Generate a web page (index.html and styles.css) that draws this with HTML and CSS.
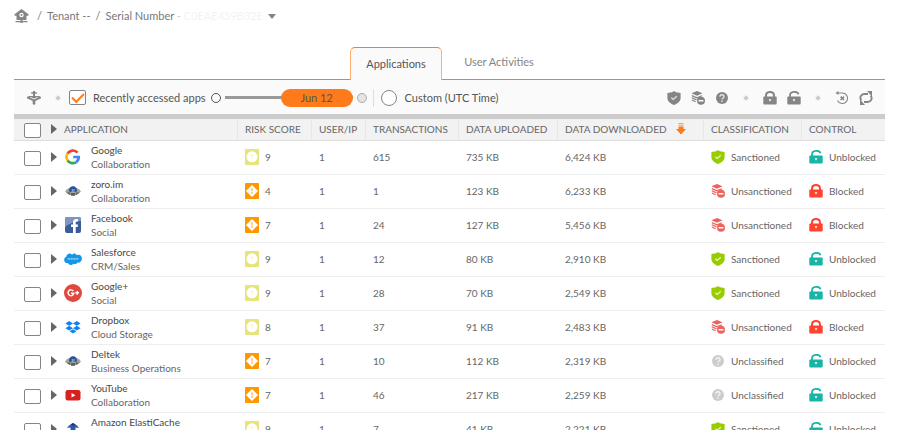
FILE: index.html
```html
<!DOCTYPE html>
<html lang="en">
<head>
<meta charset="utf-8">
<meta name="viewport" content="width=device-width, initial-scale=1">
<title>Applications</title>
<link rel="stylesheet" href="styles.css">
</head>
<body>
<svg class="sprite" aria-hidden="true">
  <symbol id="i-shield" viewBox="0 0 14 14"><path fill="currentColor" d="M7 0 9 1.200 13.600 2v5c0 3.300-3 5.500-6.600 7C3.400 12.500.400 10.300.400 7V2L5 1.200z"/><path fill="none" stroke="#fff" stroke-opacity=".8" stroke-width="1.200" d="M4.300 6.700 6.200 8.400 9.800 5.200"/></symbol>
  <symbol id="i-layers" viewBox="0 0 14 14"><path fill="currentColor" d="M6 0 11.500 2.300 6 4.800.500 2.300z"/><path fill="none" stroke="currentColor" stroke-width="1.200" d="M.800 4.600 6 6.900l5-2.200M.800 6.800l4.700 2.100M.800 9l3.800 1.700"/><circle cx="10" cy="9.800" r="4" fill="currentColor"/><path fill="#fff" d="M7.600 9h4.800v1.500H7.600z"/></symbol>
  <symbol id="i-question" viewBox="0 0 14 14"><circle cx="7" cy="7" r="6" fill="currentColor"/><path fill="none" stroke="#fff" stroke-opacity=".8" stroke-width="1.300" d="M5 5.700c0-2.600 4-2.600 4 0C9 7 7 7 7 8.600M7 9.600v1.300"/></symbol>
  <symbol id="i-lock" viewBox="0 0 14 14"><path fill="none" stroke="currentColor" stroke-width="2" d="M3 7V4.800C3 -.300 11 -.300 11 4.800V7"/><rect x=".3" y="5.500" width="13.400" height="8" rx="1" fill="currentColor"/><path fill="#fff" d="M5.700 8.300h2.600L7 10.700z"/></symbol>
  <symbol id="i-unlock" viewBox="0 0 14 14"><path fill="none" stroke="currentColor" stroke-width="1.800" d="M3 7V4.400C3 .200 10.500-.300 11.500 3.300"/><rect x=".3" y="5.500" width="13.400" height="8" rx="1" fill="currentColor"/><path fill="#fff" d="M5.700 8.300h2.600L7 10.700z"/></symbol>
  <symbol id="i-low" viewBox="0 0 14 16"><rect width="14" height="16" rx="1" fill="#e8e47c"/><circle cx="7" cy="7.800" r="5.500" fill="#fff"/><path stroke="#f3f1bd" d="M7 5v3.500M7 9.500v1"/></symbol>
  <symbol id="i-high" viewBox="0 0 14 16"><rect width="14" height="16" rx="1" fill="#ff9800"/><path fill="#fff" d="m7 2 6 6-6 6-6-6z"/><path stroke="#ffc272" stroke-width="1.600" d="M7 5.300v3M7 9v1.800"/></symbol>
  <symbol id="i-google" viewBox="-1 -1 18 18"><g fill="none" stroke-width="2.700"><path stroke="#ea4335" d="M2.600 4.600A6.100 6.100 0 0 1 12.500 3.600"/><path stroke="#fbbc05" d="M2.600 4.600a6.100 6.100 0 0 0 0 6.800"/><path stroke="#34a853" d="M2.600 11.400a6.100 6.100 0 0 0 8.600 1.700"/><path stroke="#4285f4" d="M11.200 13.100C13.300 11.700 13.700 9.900 13.700 8H8.200"/></g></symbol>
  <symbol id="i-generic" viewBox="-1 -1 18 18"><path fill="#a5a5a0" d="M0 8.500C2 5.500 5 4 8 4s6 1.500 8 4.500C14 11 11 12.400 8 12.400S2 11 0 8.500z"/><path fill="#605f5b" d="M1.500 9.500h4l-.500 2.500zM10.500 9.500h4L11 12zM6 10h4v2.800H6z"/><path fill="#28539a" d="M4 8.200C3.700 1.500 12.300 1.500 12 8.200l-1.400.800L8 8l-2.600 1z"/><path stroke="#a9c8e8" stroke-width=".900" d="M7.300 6v2M9 6v2"/></symbol>
  <symbol id="i-facebook" viewBox="-1 -1 18 18"><rect width="16" height="16" rx="2" fill="#3c5c98"/><path fill="#7e95c2" d="M0 2Q0 0 2 0h12q2 0 2 2v2Q7 4.500 0 10z"/><path fill="#fff" d="M8 16V10H6V7.400h2V5.500C8 3 9.400 1.700 13 2.200v2.300c-1.700-.1-2.300.1-2.300 1.400v1.500H13L12.600 10h-1.900v6z"/></symbol>
  <symbol id="i-salesforce" viewBox="0 0 18 16"><path fill="#1597e5" d="M2.500 5.500C2.500 2.500 6.500 1.500 8 3.700c1.500-1.800 3.900-1.500 4.700.500C15.500 3 18 5 17.900 7.800c0 2.700-2.500 4.400-4.500 3.800-.900 1.700-2.700 2-4 1.100-1.500 2-4.700 1.600-5.400-.600C1.500 12.500 0 10.500.200 8.600.300 7 1.300 6 2.500 5.500z"/><path stroke="#b9dff7" stroke-width="1.200" stroke-dasharray="1.200 .4" d="M3.500 7.800h11"/></symbol>
  <symbol id="i-gplus" viewBox="0 0 18 18"><circle cx="9" cy="9" r="9" fill="#e0483e"/><path fill="none" stroke="#fff" stroke-width="1.500" d="M9.300 7.100A2.900 2.900 0 1 0 9.800 9.200H7M11.300 8.800h3.800M13.200 6.900v3.800"/></symbol>
  <symbol id="i-dropbox" viewBox="-1 -1 18 18"><path fill="#0f82f5" d="M4.200 2 8 4.400 4.200 6.800.400 4.400zM11.800 2l3.800 2.400-3.800 2.400L8 4.400zM4.200 6.800 8 9.200l-3.800 2.400L.400 9.200zM11.800 6.800l3.800 2.400-3.800 2.400L8 9.200zM8 10.200l3.400 2.100L8 14.400l-3.400-2.100z"/></symbol>
  <symbol id="i-youtube" viewBox="-1 -1 18 18"><rect x=".5" y="3" width="15" height="10.500" rx="2.300" fill="#d7211f"/><path fill="#fff" d="m6.500 6 4 2.200-4 2.200z"/></symbol>
  <symbol id="i-elasticache" viewBox="-1 -1 18 18"><path fill="#2b5ba5" d="M8 2 12 4.500 14 7l-3.500-.5v6h-5v-6L2 7l2-2.500z"/><path fill="#173d7a" d="m8 2 2.500 1.600L8 5 5.500 3.600z"/></symbol>
</svg>

<main class="page">
  <nav class="crumbs" aria-label="Breadcrumb">
    <a class="home" href="#" aria-label="Home"><svg viewBox="0 0 14 14"><path fill="#858585" d="M7 0 14 5.300v1.400h-2V11H8v1h5v1.300H9L7 14l-2-.7H1V12h5v-1H2V6.700H0V5.300z"/><circle cx="7" cy="6" r="2.200" fill="#fff"/><circle cx="7" cy="6" r="1" fill="#858585"/></svg></a>
    <span>/</span><a href="#">Tenant --</a><span>/</span>
    <a href="#">Serial Number <span class="dash">-</span> <span class="faint">C0EAE459B32E</span></a>
    <button class="caret" aria-label="Choose serial number"></button>
  </nav>

  <div class="tabs" role="tablist">
    <button class="tab active" role="tab" aria-selected="true">Applications</button>
    <button class="tab" role="tab" aria-selected="false">User Activities</button>
  </div>

  <section class="toolbar">
    <button class="tool filter" aria-label="Filter"><svg viewBox="0 0 14 14"><path fill="#858585" d="M6 0h2v1.300h1.800v1.500H8V5h4l2 1v1.300L8.300 10v3L7 14l-1.300-1v-3L0 7.300V6l2-1h4V2.800H4.200V1.300H6z"/><path fill="none" stroke="#fafafa" stroke-width=".9" d="M3.300 6.300 7 8l3.700-1.700"/></svg></button>
    <i class="dot"></i>
    <label class="recent"><input type="checkbox" class="check" checked><span>Recently accessed apps</span></label>
    <div class="timeline">
      <i class="stop"></i>
      <div class="range"><input type="range" min="0" max="100" value="100" aria-label="Date"><output>Jun 12</output></div>
      <i class="stop end"></i>
    </div>
    <label class="custom"><input type="radio" class="radio" name="period"><span>Custom (UTC Time)</span></label>
    <div class="actions">
      <button class="tool" aria-label="Sanction"><svg><use href="#i-shield"/></svg></button>
      <button class="tool" aria-label="Unsanction"><svg><use href="#i-layers"/></svg></button>
      <button class="tool" aria-label="Unclassify"><svg><use href="#i-question"/></svg></button>
      <i class="dot"></i>
      <button class="tool" aria-label="Block"><svg><use href="#i-lock"/></svg></button>
      <button class="tool" aria-label="Unblock"><svg><use href="#i-unlock"/></svg></button>
      <i class="dot"></i>
      <button class="tool" aria-label="Reset"><svg viewBox="0 0 14 14"><g fill="none" stroke="#858585" stroke-width="1.100"><path d="M2 2H8a5.300 5.300 0 1 1-5.500 7.500"/><path stroke-width="1.500" d="m5.600 5.600 3.400 3.400M9 5.600 5.600 9"/></g><path fill="#858585" d="M.5 2 3.500 0v4z"/></svg></button>
      <button class="tool" aria-label="Refresh"><svg viewBox="0 0 14 14"><path fill="none" stroke="#858585" stroke-width="1.900" d="M2.300 9.500C-.200 5.500 3 3 5.500 3H9M11.700 4.500C14.200 8.500 11 11 8.500 11H5"/><path fill="#858585" d="M8 0h5v5.500zM6 14H1V8.500z"/></svg></button>
    </div>
  </section>

  <table class="grid">
    <colgroup><col class="c-app"><col class="c-risk"><col class="c-user"><col class="c-trans"><col class="c-up"><col class="c-down"><col class="c-class"><col class="c-ctrl"></colgroup>
    <thead>
      <tr>
        <th scope="col"><div class="app"><input type="checkbox" class="check" aria-label="Select all"><i class="expand"></i><span>APPLICATION</span></div></th>
        <th scope="col">RISK SCORE</th><th scope="col">USER/IP</th><th scope="col">TRANSACTIONS</th><th scope="col">DATA UPLOADED</th>
        <th scope="col"><div class="sorted">DATA DOWNLOADED <svg viewBox="0 0 10 12"><path fill="#ff7a1a" d="M2.500 3.500h5V6H10L5 11.500 0 6h2.500z"/><path fill="#ff9a55" d="M2.500 0h5v1h-5zM2.500 1.800h5v1h-5z"/></svg></div></th>
        <th scope="col">CLASSIFICATION</th><th scope="col">CONTROL</th>
      </tr>
    </thead>
    <tbody id="rows"></tbody>
  </table>
</main>
<script src="app.js"></script>
</body>
</html>
```
FILE: styles.css
```css
* { box-sizing: border-box; }
html { overflow: hidden; }
body {
  margin: 0;
  background: #fff;
  color: #666;
  font: 10px/14px Lato, "Open Sans", sans-serif;
}
button, input { font: inherit; color: inherit; margin: 0; }
button { padding: 0; border: 0; background: none; cursor: pointer; }
a { color: inherit; text-decoration: none; }
svg { display: block; }
.sprite { position: absolute; width: 0; height: 0; }

.page { height: 100vh; overflow: hidden; padding: 8px 15px 0 14px; }

.crumbs { display: flex; align-items: center; gap: 5px; height: 16px; color: #777; font-size: 11px; }
.home svg { width: 15px; height: 14px; margin-right: 3px; }
.dash { color: #ccc; }
.faint { color: #f3f3f3; }
.caret { border: 4px solid transparent; border-top: 5px solid #858585; border-bottom: 0; }

.tabs { display: flex; justify-content: center; margin-top: 23px; padding-left: 7px; border-bottom: 1px solid #ff7a1a; }
.tab { height: 30px; width: 92px; color: #858585; font-size: 11px; }
.tab + .tab { width: 114px; }
.tab.active {
  height: 33px;
  margin-bottom: -1px;
  border: 1px solid #ffae74;
  border-top-color: #ff7a1a;
  border-bottom: 0;
  border-radius: 5px 5px 0 0;
  background: #fafafa;
  color: #555;
}

.toolbar {
  display: flex;
  align-items: center;
  height: 39px;
  padding: 1px 12px 0 13px;
  background: #fafafa;
  border-bottom: 5px solid #ccc;
  color: #555;
  font-size: 11px;
}
.tool { display: flex; justify-content: center; color: #858585; }
.tool svg { width: 14px; height: 14px; }
.dot { flex: none; width: 4px; height: 4px; background: #ccc; transform: rotate(45deg); }
.filter { margin-right: 15px; }
.recent { display: flex; align-items: center; gap: 7px; margin-left: 9px; }
.check {
  appearance: none;
  flex: none;
  width: 17px;
  height: 15px;
  border: 1px solid #858585;
  border-radius: 2px;
  background: #fff;
  display: grid;
  place-items: center;
}
.check:checked::after {
  content: "";
  width: 10px;
  height: 5px;
  border: solid #ff7a1a;
  border-width: 0 0 2px 2px;
  transform: translateY(-1px) rotate(-45deg);
}
.timeline { display: flex; align-items: center; gap: 4px; margin-left: 5px; padding-right: 6px; border-right: 1px solid #ddd; }
.stop { width: 10px; height: 10px; border: 1px solid #555; border-radius: 50%; }
.stop.end { border-color: #aaa; background: #e4e4e4; }
.range { position: relative; display: flex; }
.range input { appearance: none; width: 128px; height: 18px; background: linear-gradient(#999, #999) center / 100% 3px no-repeat; }
.range input::-webkit-slider-thumb { appearance: none; width: 72px; height: 18px; border-radius: 9px; background: #ff7a1a; }
.range output { position: absolute; top: 0; right: 0; width: 72px; line-height: 18px; text-align: center; pointer-events: none; }
.custom { display: flex; align-items: center; gap: 8px; margin-left: 7px; }
.radio { appearance: none; width: 16px; height: 16px; border: 1px solid #858585; border-radius: 50%; background: #fff; }
.actions { display: flex; align-items: center; gap: 10px; margin-left: auto; }
.actions .dot { margin: 0 5px; }

.grid { width: 100%; table-layout: fixed; border-collapse: separate; border-spacing: 0; }
.c-risk { width: 74px; }
.c-user { width: 54px; }
.c-trans { width: 93px; }
.c-up { width: 99px; }
.c-down { width: 146px; }
.c-class { width: 98px; }
.c-ctrl { width: 84px; }
th, td { padding: 0 0 2px 8px; text-align: left; white-space: nowrap; font-weight: 400; border-bottom: 1px solid #eee; }
th { height: 22px; background: #f2f2f2; border-bottom-color: #ddd; border-left: 1px solid #e6e6e6; padding-left: 7px; }
td { height: 34px; }
th:first-child { border-left: 0; padding-left: 10px; }
td:first-child { padding-left: 10px; }
.app, .cell, .sorted { display: flex; align-items: center; }
.app .check { margin-top: 3px; }
.expand { flex: none; margin: 0 7px 0 10px; border: 5px solid transparent; border-left: 6px solid #666; border-right: 0; }
.app .logo { flex: none; width: 18px; height: 18px; margin-right: 9px; }
.name { display: block; color: #484848; }
.kind { display: block; min-height: 14px; }
.cell { gap: 6px; }
.cell svg { width: 14px; height: 14px; }
.risk svg { height: 16px; }
.sorted { gap: 9px; }
.sorted svg { width: 10px; height: 12px; }
.sanctioned { color: #9c0; }
.unsanctioned { color: #ee625c; }
.unclassified { color: #ccc; }
.blocked { color: #ff412e; }
.unblocked { color: #17b5a6; }
```
FILE: app.js
```js
const apps = [
  ["google", "Google", "Collaboration", 9, "low", 1, "615", "735 KB", "6,424 KB", "Sanctioned", "Unblocked"],
  ["generic", "zoro.im", "Collaboration", 4, "high", 1, "1", "123 KB", "6,233 KB", "Unsanctioned", "Blocked"],
  ["facebook", "Facebook", "Social", 7, "high", 1, "24", "127 KB", "5,456 KB", "Unsanctioned", "Blocked"],
  ["salesforce", "Salesforce", "CRM/Sales", 9, "low", 1, "12", "80 KB", "2,910 KB", "Sanctioned", "Unblocked"],
  ["gplus", "Google+", "Social", 9, "low", 1, "28", "70 KB", "2,549 KB", "Sanctioned", "Unblocked"],
  ["dropbox", "Dropbox", "Cloud Storage", 8, "low", 1, "37", "91 KB", "2,483 KB", "Unsanctioned", "Blocked"],
  ["generic", "Deltek", "Business Operations", 7, "high", 1, "10", "112 KB", "2,319 KB", "Unclassified", "Unblocked"],
  ["youtube", "YouTube", "Collaboration", 7, "high", 1, "46", "217 KB", "2,259 KB", "Unclassified", "Unblocked"],
  ["elasticache", "Amazon ElastiCache", "", 9, "low", 1, "7", "41 KB", "2,221 KB", "Sanctioned", "Unblocked"]
];
const icons = { Sanctioned: "shield", Unsanctioned: "layers", Unclassified: "question", Blocked: "lock", Unblocked: "unlock" };
const icon = (id, cls = "") => `<svg class="${cls}" aria-hidden="true"><use href="#i-${id}"/></svg>`;
const status = s => `<div class="cell">${icon(icons[s], s.toLowerCase())}<span>${s}</span></div>`;

document.getElementById("rows").innerHTML = apps.map(([logo, name, kind, score, level, users, trans, up, down, cls, ctrl]) => `
  <tr>
    <td><div class="app"><input type="checkbox" class="check" aria-label="Select ${name}"><i class="expand"></i>${icon(logo, "logo")}<div><span class="name">${name}</span><span class="kind">${kind}</span></div></div></td>
    <td><div class="cell risk">${icon(level)}<span>${score}</span></div></td>
    <td>${users}</td><td>${trans}</td><td>${up}</td><td>${down}</td>
    <td>${status(cls)}</td><td>${status(ctrl)}</td>
  </tr>`).join("");
```
